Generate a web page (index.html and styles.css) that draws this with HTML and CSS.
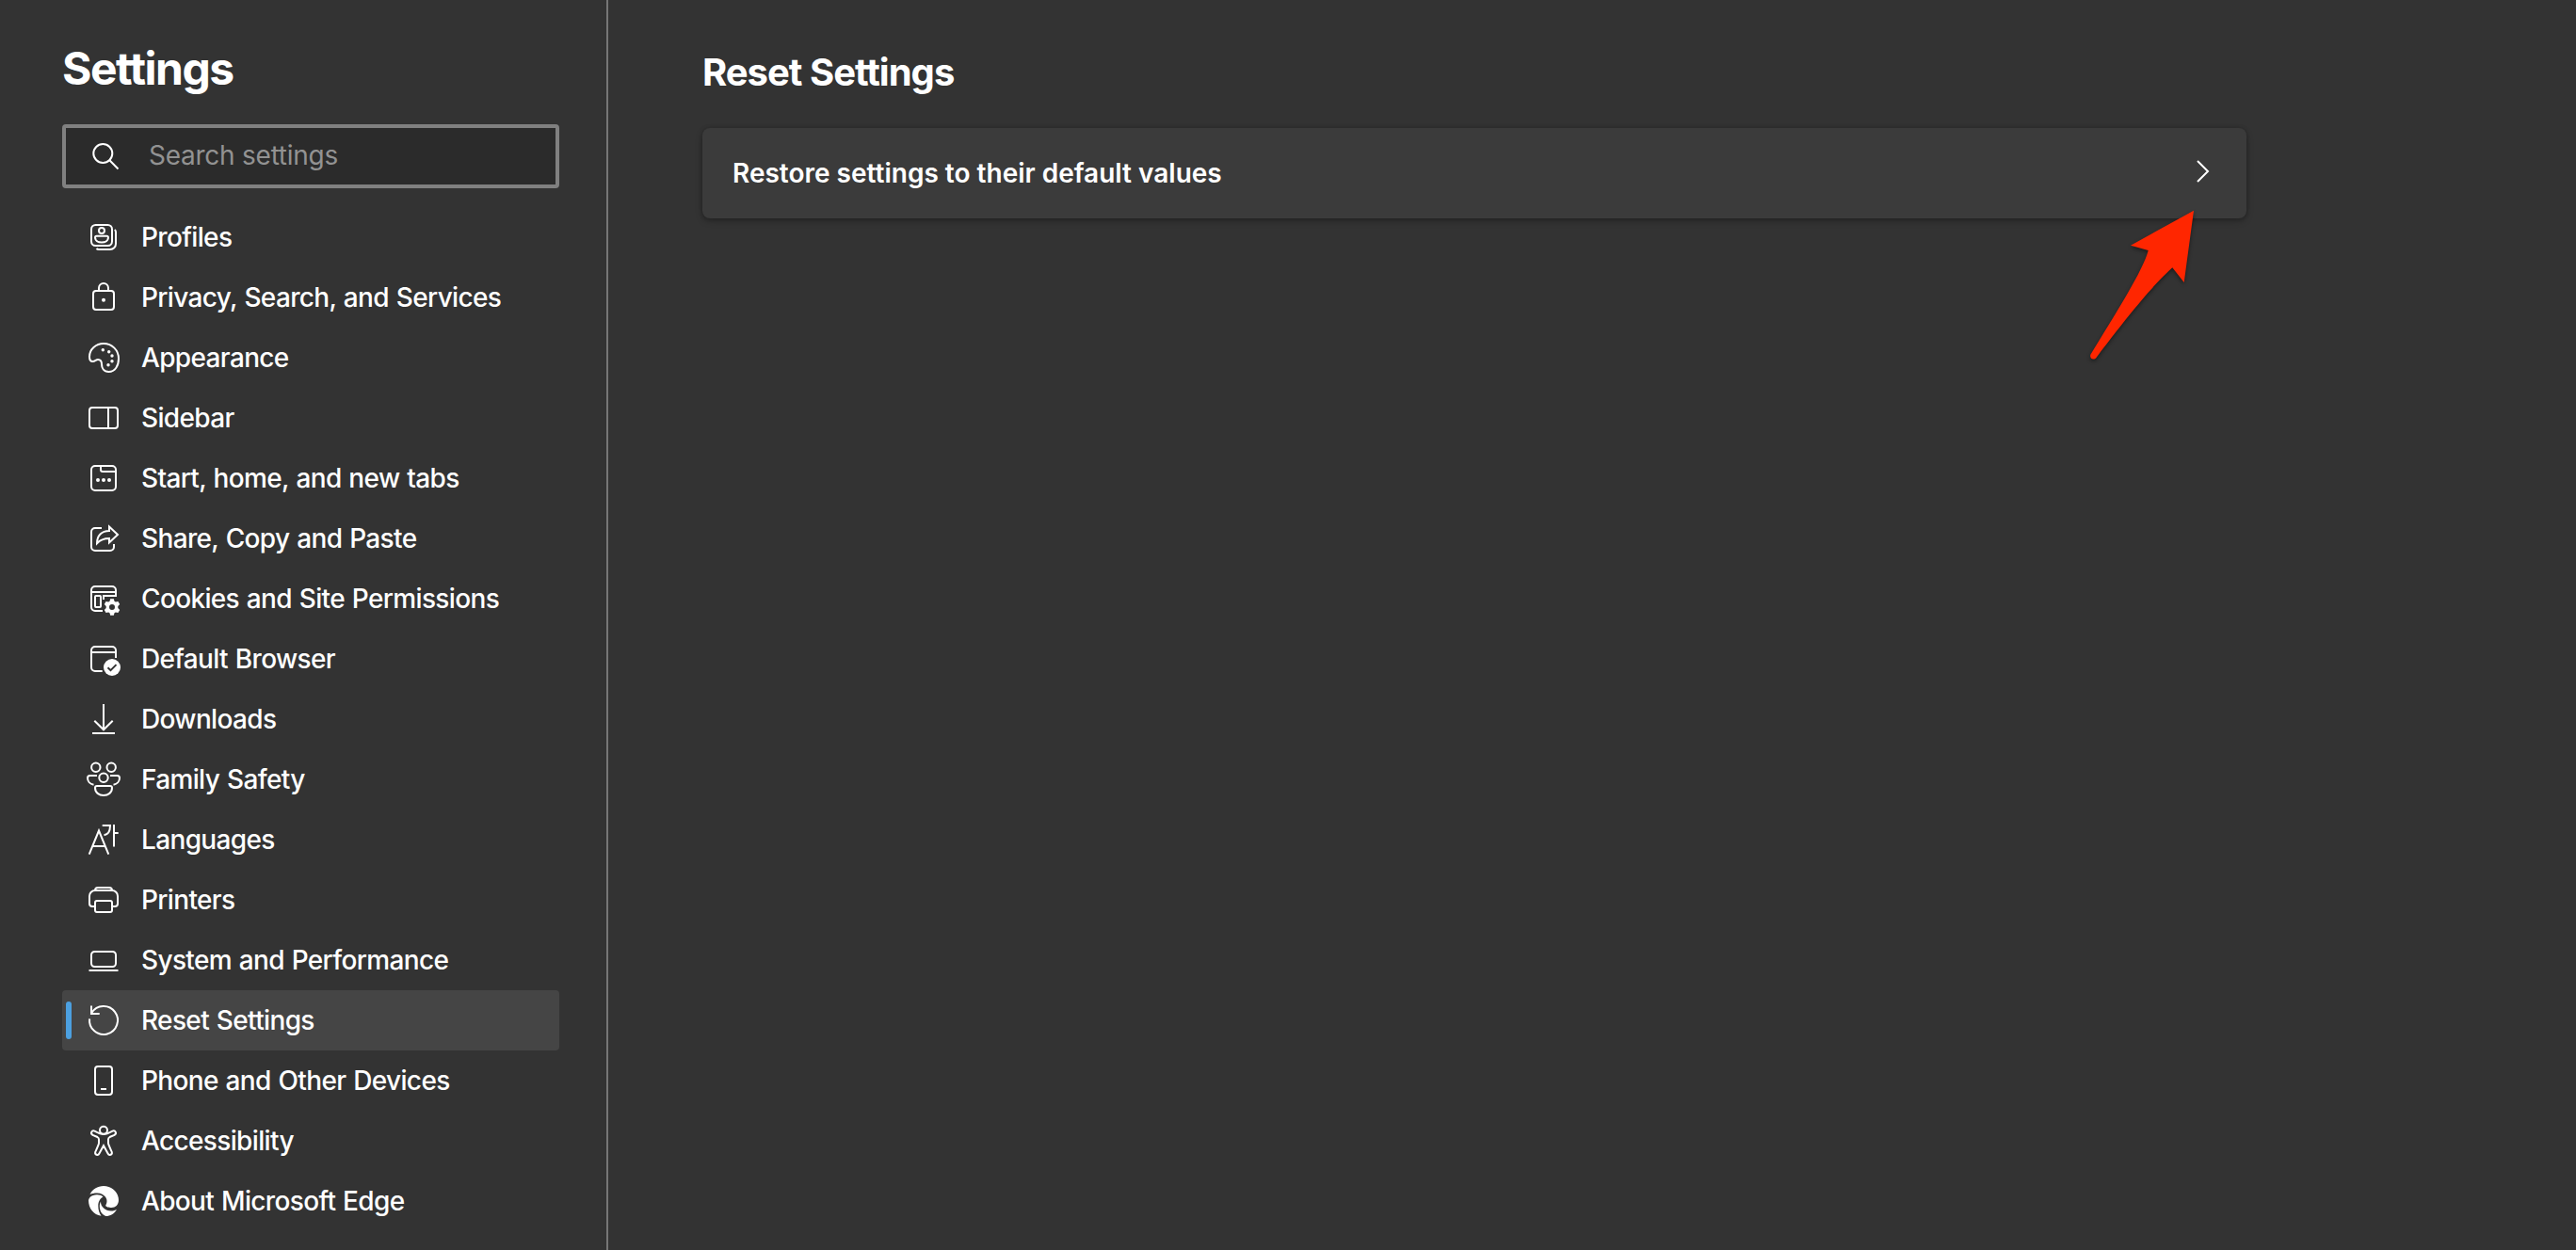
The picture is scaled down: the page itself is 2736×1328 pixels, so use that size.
FILE: index.html
```
<!DOCTYPE html>
<html lang="en">
<head>
    <meta charset="UTF-8">
    <meta name="viewport" content="width=device-width, initial-scale=1.0">
    <title>Settings</title>
    <link rel="stylesheet" href="styles.css">
</head>
<body>
    <div class="page">
        <!-- Left navigation -->
        <aside class="sidebar">
            <h1>Settings</h1>
            <label class="search">
                <svg class="icon" viewBox="0 0 40 40"><circle cx="19.3" cy="17" r="10"/><path d="M26.4 24.2L35.5 33.5"/></svg>
                <input type="text" placeholder="Search settings">
            </label>
            <nav class="menu">
                <a class="item">
                    <svg class="icon" viewBox="0 0 40 40"><rect x="7" y="7" width="22" height="22" rx="4.5"/><circle cx="18" cy="13" r="3"/><path d="M12.5 18.7h11a1.5 1.5 0 0 1 1.5 1.5c0 3.4-3 5.3-7 5.3s-7-1.9-7-5.3a1.5 1.5 0 0 1 1.5-1.5z"/><path d="M31.8 12c.8.6 1.2 1.5 1.2 2.5V27a6 6 0 0 1-6 6H15c-1 0-2-.4-2.5-1"/></svg>
                    <span>Profiles</span>
                </a>
                <a class="item">
                    <svg class="icon" viewBox="0 0 40 40"><rect x="9" y="13" width="22" height="20" rx="3"/><path d="M15 13v-3a5 5 0 0 1 10 0v3"/><circle class="solid" cx="20" cy="22.8" r="2"/></svg>
                    <span>Privacy, Search, and Services</span>
                </a>
                <a class="item">
                    <svg class="icon" viewBox="0 0 40 40"><path d="M5 19C5 11 12 5 20 5c9 0 16 7 16 16 0 8-4 14-10.5 14C20 35 18 31 18 27c0-3.500-1-5-4-5-2 0-3 2-5.500 2C6 24 5 22 5 19z"/><g class="solid"><circle cx="19.3" cy="11.7" r="1.7"/><circle cx="25.7" cy="13.7" r="1.7"/><circle cx="29" cy="18" r="1.7"/><circle cx="29" cy="23.7" r="1.7"/><circle cx="25" cy="27.7" r="1.7"/></g></svg>
                    <span>Appearance</span>
                </a>
                <a class="item">
                    <svg class="icon" viewBox="0 0 40 40"><rect x="5" y="9" width="30" height="22" rx="3"/><path d="M25 9v22"/></svg>
                    <span>Sidebar</span>
                </a>
                <a class="item">
                    <svg class="icon" viewBox="0 0 40 40"><rect x="7" y="7" width="26" height="26" rx="4"/><path d="M17 7v4a2 2 0 0 0 2 2h14"/><g class="solid"><circle cx="14" cy="22" r="2"/><circle cx="20" cy="22" r="2"/><circle cx="26" cy="22" r="2"/></g></svg>
                    <span>Start, home, and new tabs</span>
                </a>
                <a class="item">
                    <svg class="icon" viewBox="0 0 40 40"><path d="M18 9h-7a4 4 0 0 0-4 4v16a4 4 0 0 0 4 4h16a4 4 0 0 0 4-4v-3"/><path d="M26 7.5L35 16l-9 8.5V20c-6 0-10 2-13 5.2C13 17 18 12 26 12z"/></svg>
                    <span>Share, Copy and Paste</span>
                </a>
                <a class="item">
                    <svg class="icon" viewBox="0 0 40 40"><path d="M19 33h-8a4 4 0 0 1-4-4V11a4 4 0 0 1 4-4h18a4 4 0 0 1 4 4v7M7 13h26M20 21v-4h12"/><rect x="11" y="17" width="6" height="12" rx="1"/><path class="solid" fill-rule="evenodd" d="M27.2 20.2h3.6l.7 2.6 1.300.8 2.600-.7 1.800 3.100-1.900 1.900v2.200l1.900 1.900-1.800 3.100-2.600-.7-1.300.8-.7 2.600h-3.600l-.7-2.600-1.300-.8-2.600.7-1.800-3.100 1.900-1.900v-2.200l-1.900-1.900 1.800-3.100 2.600.7 1.300-.8zM29 26a3 3 0 1 0 0 6 3 3 0 0 0 0-6z"/></svg>
                    <span>Cookies and Site Permissions</span>
                </a>
                <a class="item">
                    <svg class="icon" viewBox="0 0 40 40"><path d="M18.7 33H11a4 4 0 0 1-4-4V11a4 4 0 0 1 4-4h18a4 4 0 0 1 4 4v8M7 13h26"/><circle class="solid" cx="29" cy="29" r="9"/><path class="knockout" d="M24.5 29.2l3 2.9 6-6"/></svg>
                    <span>Default Browser</span>
                </a>
                <a class="item">
                    <svg class="icon" viewBox="0 0 40 40"><path d="M20 4v27M10.3 21.7L20 31.3l9.7-9.6M8 35h24"/></svg>
                    <span>Downloads</span>
                </a>
                <a class="item">
                    <svg class="icon" viewBox="0 0 40 40"><circle cx="11.8" cy="7.3" r="4.7"/><circle cx="28.2" cy="7.3" r="4.7"/><circle cx="20" cy="18.3" r="4.7"/><path d="M13 16H5.5A2.5 2.5 0 0 0 3 18.5C3 22 5.5 25 9.5 25.7M27 16h7.5a2.5 2.5 0 0 1 2.5 2.5c0 3.5-2.5 6.5-6.5 7.2M13 27h14a2 2 0 0 1 2 2c0 5-4 8-9 8s-9-3-9-8a2 2 0 0 1 2-2z"/></svg>
                    <span>Family Safety</span>
                </a>
                <a class="item">
                    <svg class="icon" viewBox="0 0 40 40"><path d="M4.7 35.7L15 10.5l10.3 25.2M8.3 27h13.4M18.7 5H27c0 5.5-1.5 9.5-6.5 10.2M31 4v23.5M31 13h4.7"/></svg>
                    <span>Languages</span>
                </a>
                <a class="item">
                    <svg class="icon" viewBox="0 0 40 40"><path d="M11 27H8a3 3 0 0 1-3-3v-8a6 6 0 0 1 6-6h18a6 6 0 0 1 6 6v8a3 3 0 0 1-3 3h-3M11 10a3 3 0 0 1 3-3h12a3 3 0 0 1 3 3"/><rect x="11" y="21" width="18" height="12" rx="2"/></svg>
                    <span>Printers</span>
                </a>
                <a class="item">
                    <svg class="icon" viewBox="0 0 40 40"><rect x="7" y="11" width="26" height="16" rx="3.5"/><path d="M4.5 31h31"/></svg>
                    <span>System and Performance</span>
                </a>
                <a class="item active">
                    <svg class="icon" viewBox="0 0 40 40"><path d="M5.1 18.3A15 15 0 1 0 7.3 12M7 4.5V13h8.7"/></svg>
                    <span>Reset Settings</span>
                </a>
                <a class="item">
                    <svg class="icon" viewBox="0 0 40 40"><rect x="11" y="5" width="18" height="30" rx="3"/><path d="M17 29h6"/></svg>
                    <span>Phone and Other Devices</span>
                </a>
                <a class="item">
                    <svg class="icon" viewBox="0 0 40 40"><circle cx="20" cy="8.7" r="4"/><path d="M10.5 9.6C14 11.5 17 13 20 13s6-1.5 9.5-3.4c3-1.1 5 2.4 2 4.2l-5 2.2c-1 .6-1.5 1.2-1.5 2.5v4c0 1.5 3.5 8.5 3.8 9.5.7 3-3 4-4.2 1.5L20 25l-4.6 8.5c-1.2 2.5-4.9 1.5-4.2-1.5.3-1 3.8-8 3.8-9.500v-4c0-1.300-.5-1.900-1.500-2.500l-5-2.200c-3-1.800-1-5.300 2-4.200z"/></svg>
                    <span>Accessibility</span>
                </a>
                <a class="item">
                    <svg class="icon" viewBox="0 0 40 40"><g class="solid"><path d="M5.5 13C8 7.5 13.5 4 20 4c9 0 16 7 16 15 0 5-3.5 8-7.5 8-3 0-6-1-6.300-2 0-1 1.300-2 1.300-5 0-4.500-4.500-8.500-10.500-8.500-3 0-5.500.5-7.500 1.500z"/><path d="M4 19c1-4 5-5.700 9-5.700 2.500 0 5 .7 6.500 2.200-3 1.500-5.200 5-5.200 9.500s1.200 8 3.200 10.800C9.500 34.500 4 28 4 19z"/><path d="M17 20.5C16.7 26 22 30.5 28 30.5c2.500 0 4.500-.7 6-1.500-2.500 4.500-7 7-11.500 7-4.500-1.500-6.700-6-6.700-10.500 0-2 .4-3.500 1.200-5z"/></g></svg>
                    <span>About Microsoft Edge</span>
                </a>
            </nav>
        </aside>

        <!-- Content -->
        <main class="content">
            <h2>Reset Settings</h2>
            <div class="card">
                <span>Restore settings to their default values</span>
                <svg class="chevron" viewBox="0 0 16 26"><path d="M2 2l11 11L2 24"/></svg>
            </div>
            <svg class="pointer" viewBox="0 0 120 170"><path d="M114 3.7L47 40.7l18.7 5.3C61 66 30 115 4.5 156.5c-1.8 4 3 7 6 3.5C50 108 72 82 91.3 64.3L103.7 80z"/></svg>
        </main>
    </div>
</body>
</html>
```
FILE: styles.css
```
* {
    box-sizing: border-box;
}
body {
    margin: 0;
    background: #333333;
    color: #ffffff;
    font-family: Inter, "Liberation Sans", sans-serif;
    font-size: 28px;
}
.page {
    display: flex;
    height: 1328px;
    overflow: hidden;
}
.sidebar {
    width: 646px;
    padding: 44px 50px 0 66px;
    border-right: 2px solid #767676;
}
h1 {
    margin: 0 0 30px;
    font-size: 48px;
    line-height: 58px;
    font-weight: 700;
    letter-spacing: -1.5px;
}
.search {
    display: flex;
    align-items: center;
    height: 68px;
    padding-left: 20px;
    border: 4px solid #808080;
    border-radius: 4px;
    background: #2b2b2b;
}
.search input {
    flex: 1;
    min-width: 0;
    padding: 0 0 2px;
    margin-left: 28px;
    border: 0;
    outline: 0;
    background: none;
    color: #ffffff;
    font: inherit;
    letter-spacing: -0.25px;
}
.search input::placeholder {
    color: #929292;
}
.menu {
    margin-top: 20px;
}
.item {
    position: relative;
    display: flex;
    align-items: center;
    gap: 20px;
    height: 64px;
    padding-left: 24px;
    border-radius: 4px;
    font-weight: 450;
    letter-spacing: -0.65px;
    word-spacing: 1px;
}
.item.active {
    background: #454545;
}
.item.active::before {
    content: "";
    position: absolute;
    left: 4px;
    top: 12px;
    width: 6px;
    height: 40px;
    border-radius: 3px;
    background: #4ca0e0;
}
.icon {
    flex: none;
    width: 40px;
    height: 40px;
    overflow: visible;
    fill: none;
    stroke: #ffffff;
    stroke-width: 2;
}
.icon .solid {
    fill: #ffffff;
    stroke: none;
}
.icon .knockout {
    stroke: #333333;
}
.content {
    position: relative;
    flex: 1;
    padding: 52px 0 0 100px;
}
h2 {
    margin: 0 0 34px;
    font-size: 40px;
    line-height: 50px;
    font-weight: 650;
    letter-spacing: -1px;
}
.card {
    display: flex;
    align-items: center;
    justify-content: space-between;
    width: 1640px;
    height: 96px;
    padding: 0 38px 0 32px;
    border-radius: 8px;
    background: #3b3b3b;
    box-shadow: 0 3px 7px rgba(0, 0, 0, 0.26), 0 0 4px rgba(0, 0, 0, 0.2);
    font-weight: 630;
    letter-spacing: 0;
}
.chevron {
    width: 16px;
    height: 26px;
    margin-bottom: 4px;
    fill: none;
    stroke: #ffffff;
    stroke-width: 2;
}
/* red arrow lying over the card's corner */
.pointer {
    position: absolute;
    left: 1570px;
    top: 220px;
    width: 120px;
    height: 170px;
    overflow: visible;
    fill: #ff2600;
    filter: drop-shadow(0 2px 2px rgba(0, 0, 0, 0.45));
}
```
